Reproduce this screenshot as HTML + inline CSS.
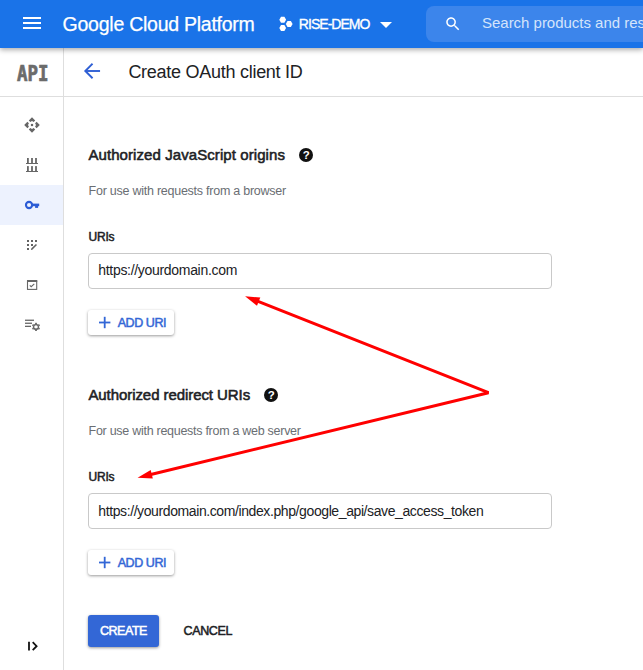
<!DOCTYPE html>
<html><head><meta charset="utf-8">
<style>
*{box-sizing:border-box;margin:0;padding:0}
html,body{width:643px;height:670px;overflow:hidden;background:#fff;font-family:"Liberation Sans",sans-serif;}
svg{position:absolute;overflow:visible}
#top{position:absolute;left:0;top:0;width:643px;height:48px;background:#1a73e8;box-shadow:0 2px 5px rgba(0,0,0,.32);z-index:5;overflow:hidden}
#top .burger{position:absolute;left:23px;top:17px;width:18px;height:12px}
#top .burger i{display:block;height:2px;background:#fff;margin-bottom:3px}
#gcp{-webkit-text-stroke:0.25px #fff;position:absolute;left:62.6px;top:12.5px;color:#fff;font-size:19.5px;line-height:22px;white-space:nowrap;letter-spacing:-0.25px}
#proj{-webkit-text-stroke:0.35px #fff;position:absolute;left:298.8px;top:16px;color:#fff;font-size:14px;line-height:16px;white-space:nowrap;letter-spacing:-0.96px}
#search{position:absolute;left:426px;top:6px;width:230px;height:36px;background:#3c85eb;border-radius:8px}
#search span{position:absolute;left:56px;top:8px;color:#d4e4fb;font-size:15px;line-height:18px;white-space:nowrap;letter-spacing:-0.02px}
#side{position:absolute;left:0;top:48px;width:64px;height:622px;border-right:1px solid #dedede;background:#fff}
#api{position:absolute;left:0;top:48px;width:64px;height:49px;border-bottom:1px solid #dedede}
#api span{position:absolute;left:16.8px;top:13.5px;-webkit-text-stroke:0.7px #6b6b6b;display:block;font-family:"DejaVu Sans Mono","Liberation Mono",monospace;font-weight:bold;font-size:20.5px;line-height:24px;color:#6b6b6b;transform-origin:0 0;transform:scaleX(0.85);white-space:nowrap}
#hdr{position:absolute;left:64px;top:48px;width:579px;height:49px;border-bottom:1px solid #dedede}
#hdr .t{position:absolute;left:64.4px;top:14px;font-size:18px;line-height:21px;color:#202124;white-space:nowrap;letter-spacing:-0.27px}
#sel{position:absolute;left:0;top:185px;width:63px;height:40px;background:#edf2fe}
h2{position:absolute;left:88.4px;font-size:15px;line-height:18px;font-weight:normal;-webkit-text-stroke:0.55px #202124;color:#202124;white-space:nowrap}
.sub{position:absolute;left:88.6px;font-size:12.5px;line-height:15px;color:#6a6e73;white-space:nowrap}
.lbl{position:absolute;left:88.6px;font-size:12px;line-height:14px;font-weight:normal;-webkit-text-stroke:0.5px #202124;color:#202124;letter-spacing:-0.27px}
.inp{position:absolute;left:88px;width:464px;height:36px;border:1px solid #c9c9c9;border-radius:4px;font-size:14px;line-height:16px;color:#202124;padding:8.3px 9.3px;white-space:nowrap}
.add{position:absolute;z-index:1;left:88px;width:86px;height:24.5px;border-radius:3px;box-shadow:0 1px 3px rgba(0,0,0,.4);color:#3367d6;font-size:12.5px;line-height:14px;font-weight:normal;-webkit-text-stroke:0.5px #3367d6;padding:5.5px 0 0 29.7px;white-space:nowrap;background:#fff;letter-spacing:-0.44px}
#create{position:absolute;left:88px;top:615px;width:71px;height:32px;border-radius:3px;background:#3367d6;color:#fff;font-weight:normal;-webkit-text-stroke:0.5px #fff;font-size:12.5px;line-height:14px;padding:9px 0 0 11.9px;box-shadow:0 1px 3px rgba(0,0,0,.4);letter-spacing:-0.45px}
#cancel{position:absolute;left:183.5px;top:624px;font-weight:normal;-webkit-text-stroke:0.5px #202124;font-size:12.5px;line-height:14px;color:#202124;letter-spacing:-0.35px}
.help{position:absolute;width:14px;height:14px;border-radius:50%;background:#111;color:#fff;font-weight:bold;font-size:11.5px;line-height:14px;text-align:center}
</style></head><body>
<div id="top">
 <div class="burger"><i></i><i></i><i></i></div>
 <div id="gcp">Google Cloud Platform</div>
 <svg style="left:0;top:0" width="643" height="48" viewBox="0 0 643 48" fill="#fff">
  <polygon points="279.3,19.8 281,16.8 284.4,16.8 286.1,19.8 284.4,22.8 281,22.8"/>
  <polygon points="285.8,23.9 287.5,20.9 290.9,20.9 292.6,23.9 290.9,26.9 287.5,26.9"/>
  <polygon points="279.3,27.9 281,24.9 284.4,24.9 286.1,27.9 284.4,30.9 281,30.9"/>
  <polygon points="380,22 392,22 386,28"/>
 </svg>
 <div id="proj">RISE-DEMO</div>
 <div id="search"><span>Search products and resources</span>
  <svg style="left:17.7px;top:9.2px" width="17.9" height="17.9" viewBox="0 0 24 24" fill="#fff"><path d="M15.5 14h-.79l-.28-.27C15.41 12.59 16 11.11 16 9.5 16 5.91 13.09 3 9.5 3S3 5.91 3 9.5 5.91 16 9.5 16c1.61 0 3.09-.59 4.23-1.57l.27.28v.79l5 4.99L20.49 19l-4.99-5zm-6 0C7.01 14 5 11.99 5 9.5S7.01 5 9.5 5 14 7.01 14 9.5 11.99 14 9.5 14z"/></svg>
 </div>
</div>
<div id="side"></div>
<div id="api"><span>API</span></div>
<div id="sel"></div>
<div id="hdr"><div class="t">Create OAuth client ID</div></div>

<!-- icons -->
<svg style="left:0;top:0;z-index:4" width="643" height="670" viewBox="0 0 643 670">
 <!-- back arrow -->
 <g fill="none" stroke="#2f5fd4" stroke-width="1.9" stroke-linecap="square" stroke-linejoin="miter">
  <polyline points="91.9,64.4 85.3,71 91.9,77.6"/><line x1="86" y1="71" x2="99.1" y2="71"/>
 </g>
 <!-- icon1 -->
 <g fill="#666">
  <polygon points="32,117.2 35.2,120.4 33.7,121.9 32,121 30.3,121.9 28.8,120.4"/>
  <polygon points="32,132.8 35.2,129.6 33.7,128.1 32,129 30.3,128.1 28.8,129.6"/>
  <polygon points="24.2,125 27.4,121.8 28.9,123.3 28,125 28.9,126.7 27.4,128.2"/>
  <polygon points="39.8,125 36.6,121.8 35.1,123.3 36,125 35.1,126.7 36.6,128.2"/>
  <rect x="30.9" y="123.9" width="2.2" height="2.2"/>
 </g>
 <!-- icon2 -->
 <g fill="#666">
  <rect x="27" y="158" width="1.8" height="5.6"/><rect x="31.1" y="158" width="1.8" height="5.6"/><rect x="35.1" y="158" width="1.8" height="5.6"/>
  <rect x="26" y="163" width="12" height="1"/>
  <rect x="27" y="166.1" width="1.8" height="5.6"/><rect x="31.1" y="166.1" width="1.8" height="5.6"/><rect x="35.1" y="166.1" width="1.8" height="5.6"/>
  <rect x="26" y="171" width="12" height="1"/>
 </g>
 <!-- key -->
 <circle cx="29.05" cy="205" r="3.1" fill="none" stroke="#2c5cd5" stroke-width="2.1"/>
 <g fill="#2c5cd5"><rect x="32.6" y="203.6" width="6.6" height="2.6"/><rect x="35.1" y="205" width="3" height="2.9"/></g>
 <!-- icon4 -->
 <g fill="#636363">
  <rect x="27" y="240" width="2" height="2"/><rect x="31" y="240" width="2" height="2"/><rect x="35" y="240" width="2" height="2"/>
  <rect x="27" y="244" width="2" height="2"/><rect x="31" y="244" width="2" height="2"/>
  <rect x="27" y="248" width="2" height="2"/>
  <polygon points="31,249.9 31.2,248.6 35.9,243.9 37,245 32.3,249.7"/>
 </g>
 <!-- icon5 -->
 <g fill="none" stroke="#666">
  <rect x="27.5" y="281" width="9.2" height="8.4" stroke-width="1.1"/>
  <line x1="27" y1="281" x2="37.2" y2="281" stroke-width="2"/>
  <polyline points="29.8,285.3 31.2,286.7 34.3,283.8" stroke-width="1.1"/>
 </g>
 <!-- icon6 -->
 <g fill="#666">
  <rect x="25" y="319.6" width="9" height="1.3"/><rect x="25" y="322.6" width="7" height="1.3"/><rect x="25" y="325.7" width="6" height="1.3"/>
 </g>
 <g transform="translate(36,326.9)">
  <circle r="2.45" fill="none" stroke="#6a6a6a" stroke-width="1.5"/>
  <g fill="#6a6a6a">
   <rect x="-0.9" y="-4.1" width="1.8" height="1.4"/><rect x="-0.9" y="2.7" width="1.8" height="1.4"/>
   <rect x="-0.9" y="-4.1" width="1.8" height="1.4" transform="rotate(60)"/><rect x="-0.9" y="2.7" width="1.8" height="1.4" transform="rotate(60)"/>
   <rect x="-0.9" y="-4.1" width="1.8" height="1.4" transform="rotate(120)"/><rect x="-0.9" y="2.7" width="1.8" height="1.4" transform="rotate(120)"/>
  </g>
 </g>
 <!-- collapse -->
 <g fill="none" stroke="#111" stroke-width="1.8">
  <line x1="29" y1="641.8" x2="29" y2="650.6"/>
  <polyline points="32.7,642.2 36.6,646.2 32.7,650.2"/>
 </g>
 <!-- plus icons -->
 <g fill="#3367d6">
  <rect x="99" y="321.6" width="11.4" height="1.8"/><rect x="103.8" y="316.8" width="1.8" height="11.4"/>
  <rect x="99" y="561.6" width="11.4" height="1.8"/><rect x="103.8" y="556.8" width="1.8" height="11.4"/>
 </g>
</svg>

<h2 style="top:146px;letter-spacing:0.08px">Authorized JavaScript origins</h2>
<div class="help" style="left:299.2px;top:147.8px">?</div>
<div class="sub" style="top:183.5px;letter-spacing:-0.25px">For use with requests from a browser</div>
<div class="lbl" style="top:229.6px">URIs</div>
<div class="inp" style="top:253px;letter-spacing:-0.31px">https://yourdomain.com</div>
<div class="add" style="top:310px">ADD URI</div>
<h2 style="top:386px;letter-spacing:-0.07px">Authorized redirect URIs</h2>
<div class="help" style="left:264.3px;top:387.5px">?</div>
<div class="sub" style="top:423.5px;letter-spacing:-0.28px">For use with requests from a web server</div>
<div class="lbl" style="top:469.7px">URIs</div>
<div class="inp" style="top:493.4px;letter-spacing:-0.4px">https://yourdomain.com/index.php/google_api/save_access_token</div>
<div class="add" style="top:550px">ADD URI</div>
<div id="create">CREATE</div>
<div id="cancel">CANCEL</div>

<svg style="left:0;top:0;z-index:9" width="643" height="670" viewBox="0 0 643 670" fill="#ff0000" stroke="#ff0000" stroke-width="3" stroke-linecap="round">
 <polyline fill="none" stroke-linecap="butt" stroke-linejoin="bevel" points="256.8,300.9 488.5,392.7 149.8,474.7"/>
 <polygon stroke="none" points="245.1,296.3 260.3,297.5 257.0,305.8"/>
 <polygon stroke="none" points="137.6,477.7 150.7,469.9 152.8,478.6"/>
</svg>
</body></html>
